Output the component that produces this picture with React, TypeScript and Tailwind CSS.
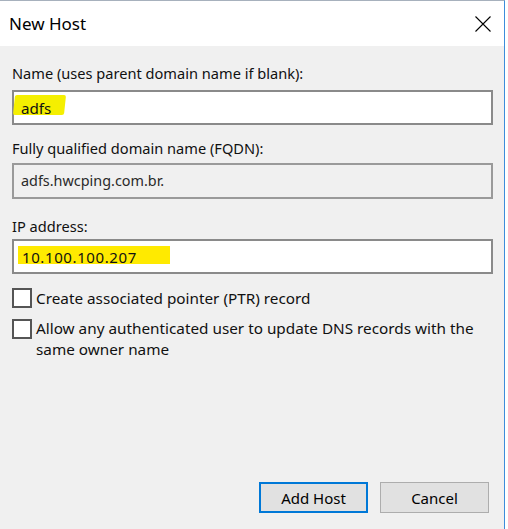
import React from "react";

const font = { fontFamily: '"Noto Sans", "Open Sans", Arial, sans-serif' };

function Checkbox() {
  return <div className="w-[20px] h-[20px] shrink-0 border-2 border-[#555] bg-white" />;
}

export default function App() {
  return (
    <div className="w-[508px] h-[529px] bg-white flex" style={font}>
      <div className="w-[505px] h-full flex flex-col border-t border-r border-t-[#a7b1bd] border-r-[#3c8ddb] bg-[#f0f0f0]">
        <div className="h-[45px] bg-white flex items-center justify-between pl-[9px] pr-[13px] shrink-0">
          <span className="text-[17px] text-black leading-[24px] mt-[1px]">New Host</span>
          <svg width="16" height="16" viewBox="0 0 16 16" className="text-black">
            <path d="M0.5 0.5 L15.5 15.5 M15.5 0.5 L0.5 15.5" stroke="currentColor" strokeWidth="1.1" fill="none" />
          </svg>
        </div>
        <div className="flex flex-col flex-1 pl-[12px] pr-[11px] text-[14.6px] leading-[20px] text-[#111]">
          <div className="mt-[17px]">Name (uses parent domain name if blank):</div>
          <div className="mt-[7px] h-[35px] border-2 border-[#8a8a8a] bg-white flex items-center relative">
            <span className="absolute left-[0px] top-[3px] w-[51px] h-[20px] bg-[#f5ef00] -skew-x-6 rounded-[2px]" />
            <span className="relative pl-[7px] text-[15.2px]">adfs</span>
          </div>
          <div className="mt-[13px]">Fully qualified domain name (FQDN):</div>
          <div className="mt-[5px] h-[36px] border-2 border-[#9a9a9a] bg-[#f0f0f0] flex items-center">
            <span className="pl-[7px] text-[14.4px] text-[#2a2a2a]">adfs.hwcping.com.br.</span>
          </div>
          <div className="mt-[17px]">IP address:</div>
          <div className="mt-[3px] h-[35px] border-2 border-[#8a8a8a] bg-white flex items-center relative">
            <span className="absolute left-[4px] top-[5px] w-[152px] h-[18px] bg-[#ffea00]" />
            <span className="relative pl-[8px] text-[15px] tracking-[0.6px]">10.100.100.207</span>
          </div>
          <div className="mt-[14px] flex items-start gap-[4px] text-[15.3px]">
            <Checkbox />
            <span className="leading-[20px]">Create associated pointer (PTR) record</span>
          </div>
          <div className="mt-[11px] flex items-start gap-[4px] text-[15.3px]">
            <Checkbox />
            <span className="leading-[21px] -mt-[1px]">
              Allow any authenticated user to update DNS records with the
              <br />
              same owner name
            </span>
          </div>
          <div className="flex-1" />
          <div className="flex justify-end gap-[12px] pr-[4px] mb-[16px]">
            <button className="w-[109px] h-[31px] border-2 border-[#0078d7] bg-[#e1e1e1] text-[15px] text-black">Add Host</button>
            <button className="w-[109px] h-[31px] border border-[#adadad] bg-[#e1e1e1] text-[15px] text-black">Cancel</button>
          </div>
        </div>
      </div>
    </div>
  );
}
